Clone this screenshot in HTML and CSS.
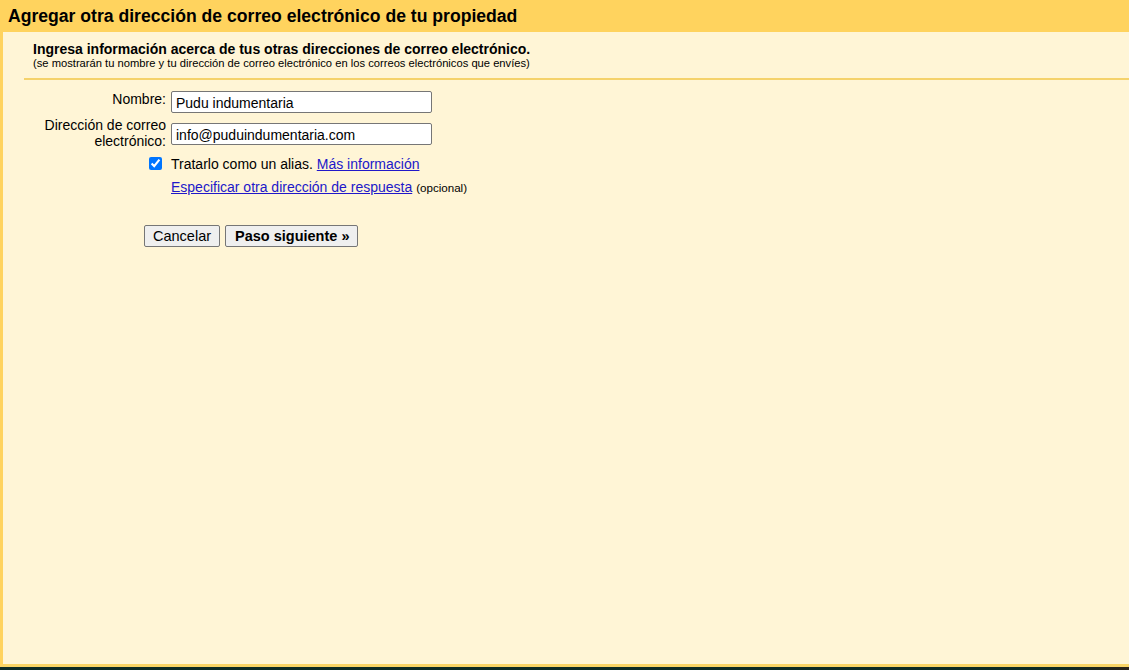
FILE: index.html
```html
<!DOCTYPE html>
<html lang="es">
<head>
<meta charset="utf-8">
<title>Agregar otra dirección</title>
<link rel="stylesheet" href="styles.css">
</head>
<body>
<div class="page">
  <div class="header">Agregar otra dirección de correo electrónico de tu propiedad</div>
  <div class="panel">
    <div class="intro">
      <div class="intro-title">Ingresa información acerca de tus otras direcciones de correo electrónico.</div>
      <div class="intro-sub">(se mostrarán tu nombre y tu dirección de correo electrónico en los correos electrónicos que envíes)</div>
    </div>
    <div class="form">
      <label class="lbl" for="n">Nombre:</label>
      <input class="field" id="n" type="text" value="Pudu indumentaria">
      <label class="lbl" for="e">Dirección de correo electrónico:</label>
      <input class="field field-2" id="e" type="text" value="info@puduindumentaria.com">
      <div class="chk-cell"><input class="chk" type="checkbox" checked></div>
      <div class="txt">Tratarlo como un alias. <a href="#">Más información</a></div>
      <div></div>
      <div class="txt"><a href="#">Especificar otra dirección de respuesta</a> <span class="small">(opcional)</span></div>
    </div>
    <div class="actions">
      <button class="btn">Cancelar</button>
      <button class="btn btn-bold">Paso siguiente »</button>
    </div>
  </div>
  <div class="taskbar"></div>
</div>
</body>
</html>
```
FILE: styles.css
```css
html, body {
  margin: 0;
  padding: 0;
  height: 100%;
}
body {
  font-family: "Liberation Sans", Arial, sans-serif;
  color: #000;
  background: #fff5d6;
}
.page {
  display: flex;
  flex-direction: column;
  height: 670px;
}
.header {
  background: #ffd35e;
  height: 32px;
  line-height: 33px;
  padding-left: 8px;
  font-size: 17.6px;
  font-weight: bold;
  flex: none;
}
.panel {
  flex: 1;
  background: #fff5d6;
  border-left: 3px solid #ffd35e;
  border-bottom: 3px solid #f9d466;
}
.intro {
  margin-left: 21px;
  padding: 10px 0 8px 9px;
  border-bottom: 2px solid #f5d26b;
}
.intro-title {
  font-size: 14px;
  font-weight: bold;
  line-height: 15px;
}
.intro-sub {
  font-size: 11.2px;
  line-height: 13px;
}
.form {
  display: grid;
  grid-template-columns: 163px auto;
  column-gap: 5px;
  row-gap: 4px;
  margin-top: 11px;
  font-size: 14px;
  justify-items: start;
}
.lbl {
  justify-self: end;
  text-align: right;
  line-height: 16px;
  width: 130px;
}
.field {
  font-family: "Liberation Sans", Arial, sans-serif;
  font-size: 14px;
  width: 261px;
  height: 22px;
  box-sizing: border-box;
  border: 1px solid #767676;
  border-radius: 2px;
  padding: 1px 4px 0;
  margin: 0;
  background: #fff;
  align-self: start;
}
.field-2 { margin-top: 6px; }
.chk-cell {
  justify-self: end;
  padding-right: 4px;
  margin-top: 4px;
}
.chk {
  width: 13px;
  height: 13px;
  margin: 0;
  display: block;
  accent-color: #0075ff;
}
.txt {
  line-height: 16px;
  margin-top: 3px;
}
a {
  color: #2118c9;
}
.small {
  font-size: 11.6px;
}
.actions {
  display: flex;
  gap: 5px;
  margin: 29px 0 0 141px;
}
.btn {
  font-family: "Liberation Sans", Arial, sans-serif;
  font-size: 14.5px;
  height: 22px;
  padding: 0 8px;
  border: 1px solid #767676;
  border-radius: 2px;
  background: #efefef;
  color: #000;
}
.btn-bold {
  font-weight: bold;
  padding: 0 8px 0 9px;
}
.taskbar {
  height: 3px;
  flex: none;
  background: linear-gradient(90deg, #0b2a26 0%, #0b2a26 94%, #2b2218 100%);
}
```
